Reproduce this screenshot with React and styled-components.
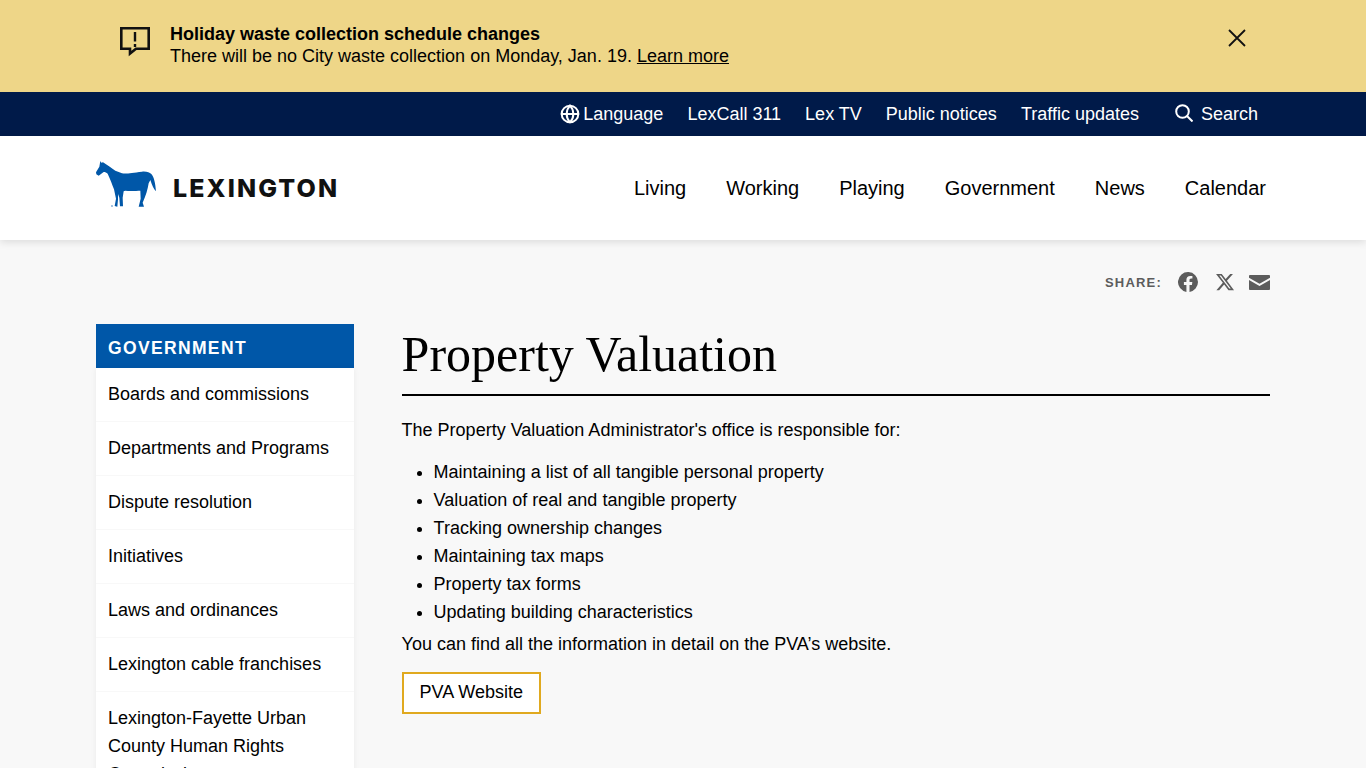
import React from "react";
import styled, { createGlobalStyle } from "styled-components";
import { Globe } from "lucide-react";

const GlobalStyle = createGlobalStyle`
  html, body {
    margin: 0;
    height: 768px;
    overflow: hidden;
    background: #f8f8f8;
    font-family: "Liberation Sans", Arial, sans-serif;
    color: #000;
  }
  * { box-sizing: border-box; }
`;

// Alert banner
const Banner = styled.div`
  height: 92px;
  background: #eed688;
  display: flex;
  justify-content: space-between;
  padding: 23px 120px 0 119px;
`;

const BannerLeft = styled.div`
  display: flex;
  gap: 19px;
`;

const BannerIcon = styled.svg`
  width: 32px;
  height: 32px;
  margin-top: 3px;
`;

const BannerText = styled.div`
  font-size: 18px;
  line-height: 22px;
`;

const BannerTitle = styled.div`
  font-weight: 700;
`;

const Link = styled.a`
  color: #000;
  text-decoration: underline;
`;

const Close = styled.button`
  background: none;
  border: 0;
  padding: 0;
  width: 18px;
  height: 18px;
  margin-top: 6px;
  color: #000;
  display: flex;
`;

// Dark utility bar
const TopBar = styled.div`
  height: 44px;
  background: #001a49;
  color: #fff;
  display: flex;
  justify-content: flex-end;
  align-items: center;
  padding-right: 108px;
  font-size: 18px;
`;

const TopItem = styled.span`
  display: flex;
  align-items: center;
  margin-left: ${({ $gap }) => $gap || 24}px;
  gap: ${({ $icon }) => $icon || 0}px;
`;

const SearchIcon = styled.svg`
  width: 18px;
  height: 18px;
  margin-top: -2px;
`;

// Main header
const Header = styled.header`
  height: 104px;
  background: #fff;
  box-shadow: 0 2px 8px rgba(0, 0, 0, 0.12);
  display: flex;
  justify-content: space-between;
  align-items: center;
  padding: 0 100px 0 96px;
  position: relative;
`;

const Logo = styled.div`
  display: flex;
  align-items: center;
  gap: 16px;
`;

const HorseMark = styled.svg`
  width: 61px;
  height: 48px;
  margin-bottom: 8px;
`;

const Wordmark = styled.span`
  font-family: "Inter", sans-serif;
  font-weight: 800;
  font-size: 25px;
  letter-spacing: 2.1px;
  color: #111;
`;

const Nav = styled.nav`
  display: flex;
  gap: 40px;
  font-size: 20px;
`;

// Page body
const Page = styled.main`
  padding: 0 96px;
`;

const ShareRow = styled.div`
  display: flex;
  justify-content: flex-end;
  align-items: center;
  height: 84px;
  color: #5c5c5c;
`;

const ShareLabel = styled.span`
  font-size: 13px;
  font-weight: 700;
  letter-spacing: 1.2px;
  margin-right: 16px;
`;

const ShareIcon = styled.svg`
  width: ${({ $size }) => $size || 20}px;
  height: ${({ $size }) => $size || 20}px;
  margin-left: ${({ $gap }) => $gap || 0}px;
  fill: currentColor;
`;

const Columns = styled.div`
  display: flex;
  gap: 47.6px;
`;

const Sidebar = styled.aside`
  width: 258px;
  flex: none;
`;

const SideTitle = styled.div`
  height: 44px;
  background: #0057a8;
  color: #fff;
  font-size: 17.5px;
  font-weight: 700;
  letter-spacing: 1.35px;
  padding: 4px 12px 0;
  display: flex;
  align-items: center;
`;

const SideList = styled.ul`
  list-style: none;
  margin: 0;
  padding: 0;
  background: #fff;
  box-shadow: 0 0 6px rgba(0, 0, 0, 0.06);
`;

const SideItem = styled.li`
  padding: 12px 12px 13px;
  font-size: 18px;
  line-height: 28px;
  border-bottom: 1px solid #f8f8f8;
`;

const Content = styled.div`
  flex: 1;
`;

const Title = styled.h1`
  margin: 0 0 20px;
  font-family: "Liberation Serif", "Times New Roman", serif;
  font-weight: 400;
  font-size: 50px;
  line-height: 60px;
  padding-bottom: 10px;
  border-bottom: 2px solid #000;
`;

const Para = styled.p`
  margin: 0;
  font-size: 18px;
  line-height: 28px;
`;

const Bullets = styled.ul`
  margin: 14px 0 4px;
  padding-left: 32px;
  font-size: 18px;
  line-height: 28px;
`;

const OutlineButton = styled.a`
  display: inline-block;
  margin-top: 14px;
  padding: 0 16px;
  height: 42px;
  line-height: 36px;
  font-size: 18px;
  border: 2px solid #e0a91f;
  background: #fff;
  color: #000;
`;

const sideItems = [
  "Boards and commissions",
  "Departments and Programs",
  "Dispute resolution",
  "Initiatives",
  "Laws and ordinances",
  "Lexington cable franchises",
  "Lexington-Fayette Urban County Human Rights Commission",
];

const bullets = [
  "Maintaining a list of all tangible personal property",
  "Valuation of real and tangible property",
  "Tracking ownership changes",
  "Maintaining tax maps",
  "Property tax forms",
  "Updating building characteristics",
];

// Traced from the logo at 3x, so the viewBox is in zoomed pixels
const Horse = () => (
  <HorseMark viewBox="12 12 183 144">
    <path
      fill="#0057a8"
      d="M25 15 L28 20 L33 19 L50 30 L70 44 L90 52 C105 54 120 50 150 47 C165 46 172 49 178 54 C186 62 190 82 192 106 C186 100 180 88 175 72 L170 82 C167 100 162 118 152 140 L156 152 L140 152 L146 128 L145 104 C135 104 115 106 100 104 L95 106 L92 125 L93 151 L84 151 L82 125 L78 114 L78 130 L76 152 L68 150 L72 128 L66 100 C60 85 56 72 47 53 C43 50 40 48 35 48 L20 59 L13 55 L12 49 L22 32 Z"
    />
    <circle cx="60" cy="150" r="2" fill="#0057a8" />
  </HorseMark>
);

const App = () => (
  <>
    <GlobalStyle />
    <Banner>
      <BannerLeft>
        <BannerIcon viewBox="0 0 32 32" fill="none">
          <path d="M2.3 2.300 H29.700 V22.700 H17 L11 27.500 V22.700 H2.300 Z" stroke="#111" strokeWidth="2.6" />
          <path d="M16 6 V15.500 M16 18 V21" stroke="#111" strokeWidth="2.4" />
        </BannerIcon>
        <BannerText>
          <BannerTitle>Holiday waste collection schedule changes</BannerTitle>
          There will be no City waste collection on Monday, Jan. 19. <Link>Learn more</Link>
        </BannerText>
      </BannerLeft>
      <Close>
        <svg width="18" height="18" viewBox="0 0 18 18">
          <path d="M1 1 L17 17 M17 1 L1 17" stroke="#111" strokeWidth="1.8" />
        </svg>
      </Close>
    </Banner>
    <TopBar>
      <TopItem $icon={3}>
        <Globe size={20} strokeWidth={2.4} />
        Language
      </TopItem>
      <TopItem>LexCall 311</TopItem>
      <TopItem>Lex TV</TopItem>
      <TopItem>Public notices</TopItem>
      <TopItem>Traffic updates</TopItem>
      <TopItem $gap={36} $icon={8}>
        <SearchIcon viewBox="0 0 18 18" fill="none">
          <circle cx="7.500" cy="7.500" r="6.300" stroke="#fff" strokeWidth="2" />
          <path d="M12 12 L17.500 17.500" stroke="#fff" strokeWidth="2" />
        </SearchIcon>
        Search
      </TopItem>
    </TopBar>
    <Header>
      <Logo>
        <Horse />
        <Wordmark>LEXINGTON</Wordmark>
      </Logo>
      <Nav>
        <span>Living</span>
        <span>Working</span>
        <span>Playing</span>
        <span>Government</span>
        <span>News</span>
        <span>Calendar</span>
      </Nav>
    </Header>
    <Page>
      <ShareRow>
        <ShareLabel>SHARE:</ShareLabel>
        <ShareIcon viewBox="0 0 24 24">
          <path d="M24 12a12 12 0 1 0-13.900 11.900v-8.400H7.100V12h3V9.400c0-3 1.800-4.700 4.500-4.700 1.300 0 2.700.2 2.700.2v3h-1.500c-1.500 0-2 .9-2 1.900V12h3.400l-.5 3.500h-2.900v8.400A12 12 0 0 0 24 12z" />
        </ShareIcon>
        <ShareIcon $gap={17} viewBox="0 0 24 24">
          <path d="M18.244 2.250h3.308l-7.227 8.260 8.502 11.240H16.170l-5.214-6.817L4.990 21.750H1.680l7.730-8.835L1.254 2.250H8.080l4.713 6.231zm-1.161 17.520h1.833L7.084 4.126H5.117z" />
        </ShareIcon>
        <ShareIcon $gap={14} $size={21} viewBox="0 0 24 24">
          <path d="M1 3.500h22a1 1 0 0 1 1 1V6.500L12 13.500 0 6.500V4.500a1 1 0 0 1 1-1zM0 9l12 7 12-7v10.500a1 1 0 0 1-1 1H1a1 1 0 0 1-1-1z" />
        </ShareIcon>
      </ShareRow>
      <Columns>
        <Sidebar>
          <SideTitle>GOVERNMENT</SideTitle>
          <SideList>
            {sideItems.map((item) => (
              <SideItem key={item}>{item}</SideItem>
            ))}
          </SideList>
        </Sidebar>
        <Content>
          <Title>Property Valuation</Title>
          <Para>The Property Valuation Administrator's office is responsible for:</Para>
          <Bullets>
            {bullets.map((item) => (
              <li key={item}>{item}</li>
            ))}
          </Bullets>
          <Para>You can find all the information in detail on the PVA’s website.</Para>
          <OutlineButton>PVA Website</OutlineButton>
        </Content>
      </Columns>
    </Page>
  </>
);

export default App;
